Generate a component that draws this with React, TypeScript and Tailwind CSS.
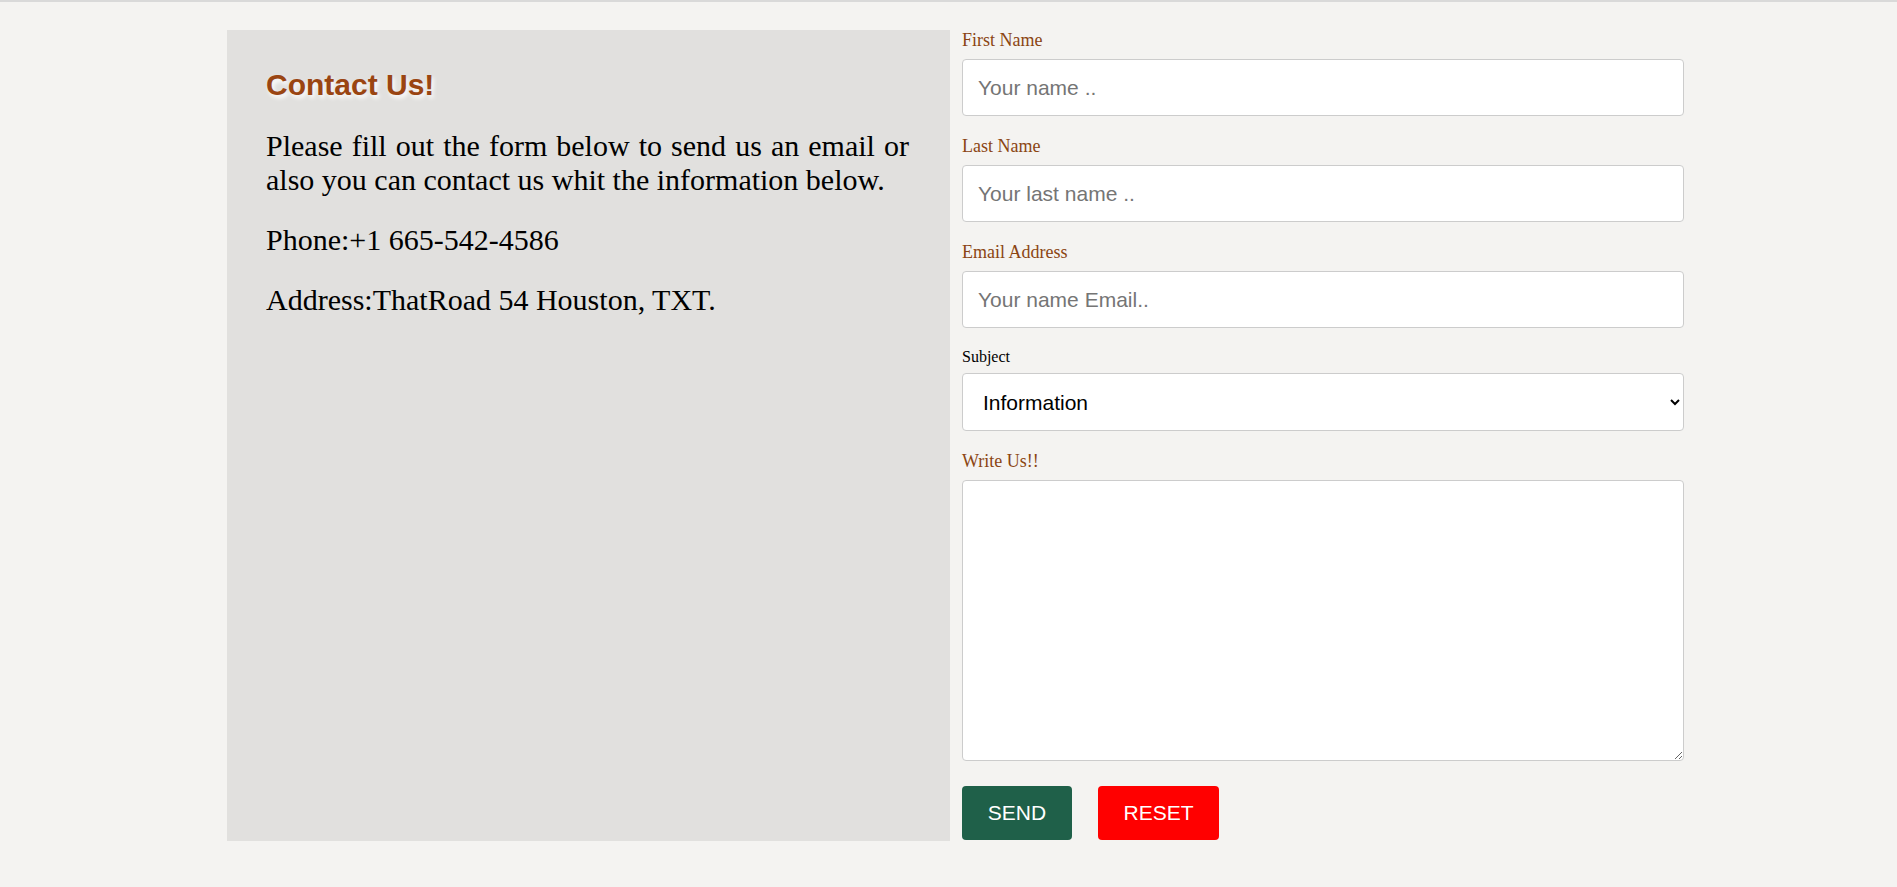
import React from 'react';

const labelClass = "block h-[21px] text-[18px] leading-[21px] text-[#8b4513] mb-[8px]";
const fieldClass =
  "block w-[722px] h-[57px] px-[15px] bg-white border border-[#cccccc] rounded-[4px] text-[21px] text-black placeholder:text-[#757575] font-['Liberation_Sans',Arial,sans-serif] outline-none";

const App: React.FC = () => {
  return (
    <div className="min-h-screen bg-[#f4f3f1] border-t-2 border-[#d9d9d9] font-['Liberation_Serif','Times_New_Roman',serif]">
      <div className="flex items-stretch pt-[28px] pl-[227px]">
        {/* Info panel */}
        <div className="w-[723px] bg-[#e1e0de] pl-[39px] pr-[41px] pt-[38px]">
          <h2 className="font-['Liberation_Sans',Arial,sans-serif] font-bold text-[30px] leading-[34.5px] text-[#9a4512] [text-shadow:2px_3px_4px_#ffffff]">
            Contact Us!
          </h2>
          <p className="mt-[26px] text-[30px] leading-[34px] text-black text-justify">
            Please fill out the form below to send us an email or also you can contact us whit the information below.
          </p>
          <p className="mt-[26px] text-[30px] leading-[34px] text-black">Phone:+1 665-542-4586</p>
          <p className="mt-[26px] text-[30px] leading-[34px] text-black">Address:ThatRoad 54 Houston, TXT.</p>
        </div>

        {/* Form */}
        <form className="pl-[12px] pb-[1px]" onSubmit={(e) => e.preventDefault()}>
          <label className={labelClass}>First Name</label>
          <input type="text" placeholder="Your name .." className={fieldClass + " mb-[20px]"} />

          <label className={labelClass}>Last Name</label>
          <input type="text" placeholder="Your last name .." className={fieldClass + " mb-[20px]"} />

          <label className={labelClass}>Email Address</label>
          <input type="email" placeholder="Your name Email.." className={fieldClass + " mb-[20px]"} />

          <label className="block h-[18px] text-[16px] leading-[18px] text-black mb-[7px]">Subject</label>
          <select
            defaultValue="Information"
            className="block w-[722px] h-[58px] pl-[16px] pr-[6px] bg-white border border-[#cccccc] rounded-[4px] text-[21px] text-black font-['Liberation_Sans',Arial,sans-serif] outline-none mb-[20px]"
          >
            <option>Information</option>
            <option>Support</option>
            <option>Other</option>
          </select>

          <label className={labelClass}>Write Us!!</label>
          <textarea className="block w-[722px] h-[281px] p-[14px] bg-white border border-[#cccccc] rounded-[4px] text-[21px] font-['Liberation_Sans',Arial,sans-serif] outline-none mb-[25px]" />

          <div className="flex gap-[26px]">
            <button
              type="submit"
              className="h-[54px] w-[110px] bg-[#1f6049] text-white rounded-[4px] text-[21px] font-['Liberation_Sans',Arial,sans-serif]"
            >
              SEND
            </button>
            <button
              type="reset"
              className="h-[54px] w-[121px] bg-[#ff0000] text-white rounded-[4px] text-[21px] font-['Liberation_Sans',Arial,sans-serif]"
            >
              RESET
            </button>
          </div>
        </form>
      </div>
    </div>
  );
};

export default App;
